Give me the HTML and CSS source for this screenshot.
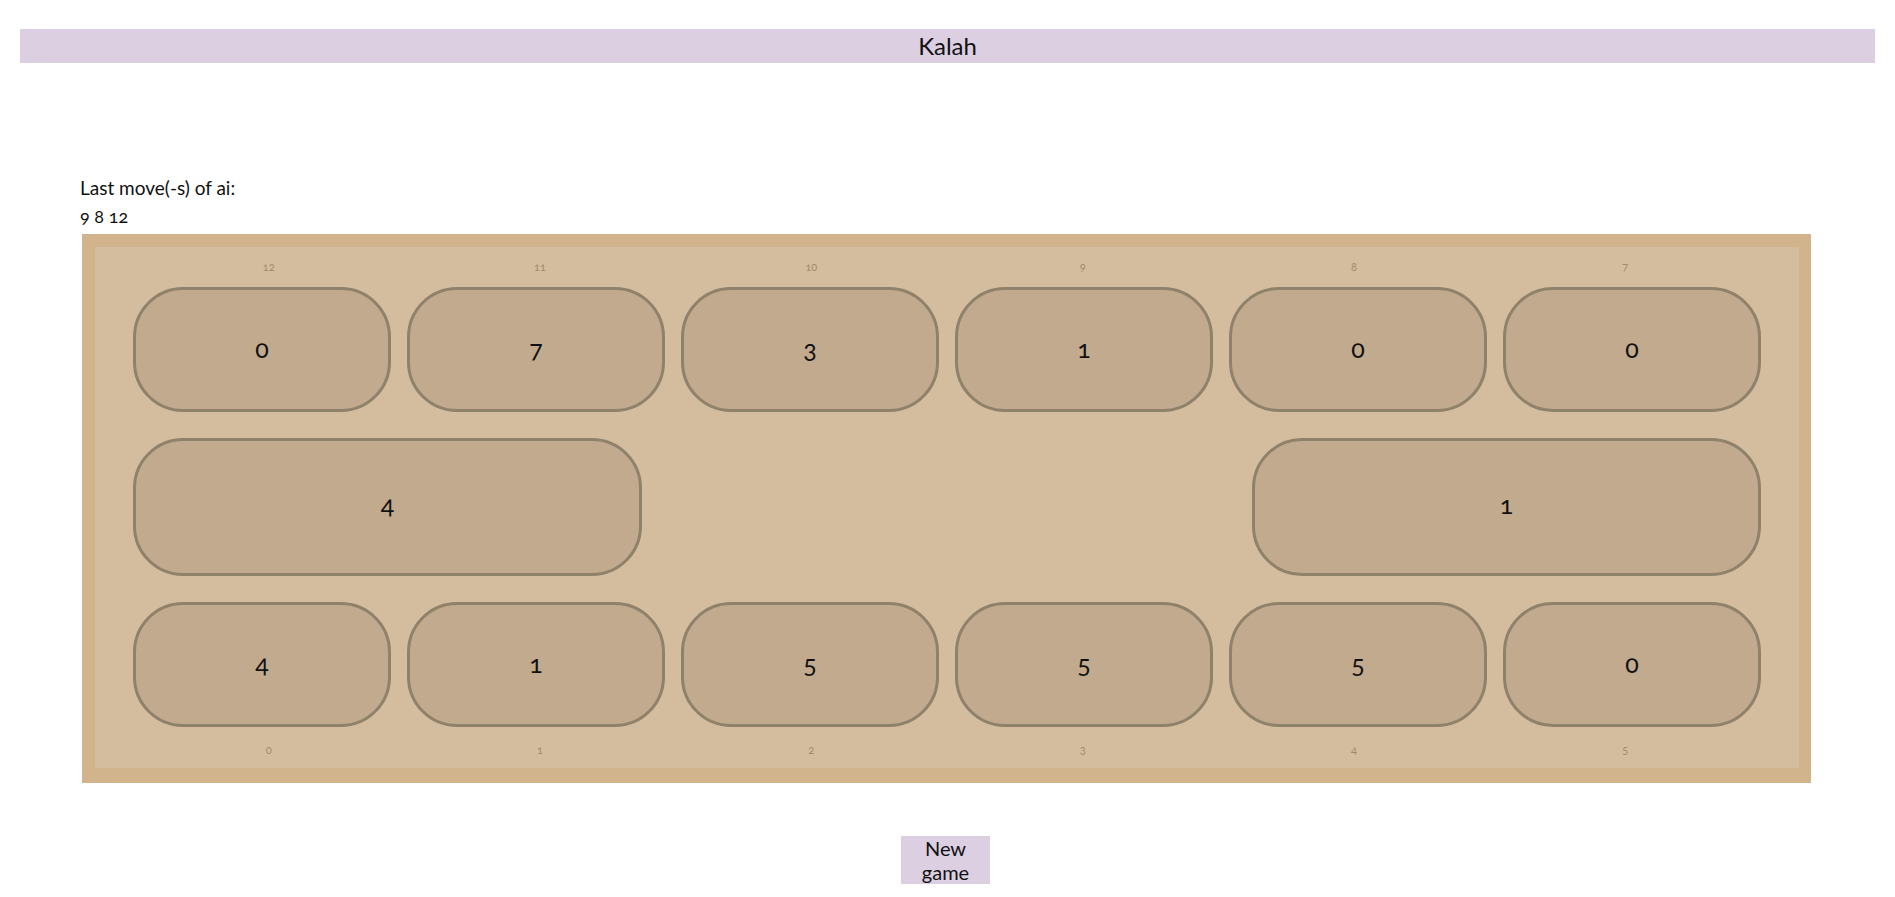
FILE: index.html
```html
<!DOCTYPE html>
<html lang="en">
<head>
<meta charset="utf-8">
<title>Kalah</title>
<link rel="stylesheet" href="styles.css">
</head>
<body>
<header class="title-bar">Kalah</header>
<main class="game">
  <div class="last-move">
    <div class="last-move-label">Last move(-s) of ai:</div>
    <div class="last-move-list">9 8 12</div>
  </div>
  <section class="board">
    <div class="board-inner">
      <div class="labels labels-top">
        <span>12</span><span>11</span><span>10</span><span>9</span><span>8</span><span>7</span>
      </div>
      <div class="pit-row">
        <div class="pit">0</div>
        <div class="pit">7</div>
        <div class="pit">3</div>
        <div class="pit">1</div>
        <div class="pit">0</div>
        <div class="pit">0</div>
      </div>
      <div class="store-row">
        <div class="store">4</div>
        <div class="store">1</div>
      </div>
      <div class="pit-row">
        <div class="pit">4</div>
        <div class="pit">1</div>
        <div class="pit">5</div>
        <div class="pit">5</div>
        <div class="pit">5</div>
        <div class="pit">0</div>
      </div>
      <div class="labels labels-bottom">
        <span>0</span><span>1</span><span>2</span><span>3</span><span>4</span><span>5</span>
      </div>
    </div>
  </section>
  <div class="actions">
    <button class="new-game" type="button">New game</button>
  </div>
</main>
</body>
</html>
```

FILE: styles.css
```css
html, body {
  margin: 0;
  padding: 0;
  background: #ffffff;
}

body {
  font-family: "Lato", "Open Sans", "Liberation Sans", sans-serif;
  font-variant-numeric: oldstyle-nums;
  color: #111111;
}

.title-bar {
  margin: 29px 20px 0 20px;
  height: 34px;
  line-height: 34px;
  background: #dccfe2;
  text-align: center;
  font-size: 24px;
}

.game {
  padding: 0 84px 0 80px;
}

.last-move {
  margin-top: 110px;
  line-height: 29px;
}

.last-move-label {
  font-size: 19px;
}

.last-move-list {
  font-size: 18px;
}

.board {
  margin: 3px 0 0 2px;
  padding: 13px 12px 15px 13px;
  background: #d2b48c;
}

.board-inner {
  background: #d4bd9e;
  display: flex;
  flex-direction: column;
  align-items: center;
}

.labels {
  width: 1628px;
  display: grid;
  grid-template-columns: repeat(6, 1fr);
  text-align: center;
  font-size: 11px;
  color: #a08a6e;
}

.labels-top {
  height: 40px;
  line-height: 40px;
}

.labels-bottom {
  height: 41px;
  padding-top: 16px;
  line-height: 14px;
  box-sizing: border-box;
}

.pit-row {
  width: 1628px;
  display: grid;
  grid-template-columns: repeat(6, 258px);
  column-gap: 16px;
}

.pit,
.store {
  box-sizing: border-box;
  border: 3px solid #8f816a;
  background: #c1aa8d;
  border-radius: 50px;
  display: flex;
  align-items: center;
  justify-content: center;
  padding-bottom: 4px;
  font-size: 25px;
}

.pit {
  height: 125px;
}

.store-row {
  width: 1628px;
  margin: 26px 0;
  display: flex;
  justify-content: space-between;
}

.store {
  width: 509px;
  height: 138px;
  padding-bottom: 6px;
}

.actions {
  display: flex;
  justify-content: center;
  margin-top: 53px;
}

.new-game {
  box-sizing: border-box;
  width: 89px;
  height: 48px;
  padding: 0 6px;
  border: none;
  background: #dccfe2;
  font-family: inherit;
  font-size: 20px;
  line-height: 24px;
  color: #111111;
}
```
